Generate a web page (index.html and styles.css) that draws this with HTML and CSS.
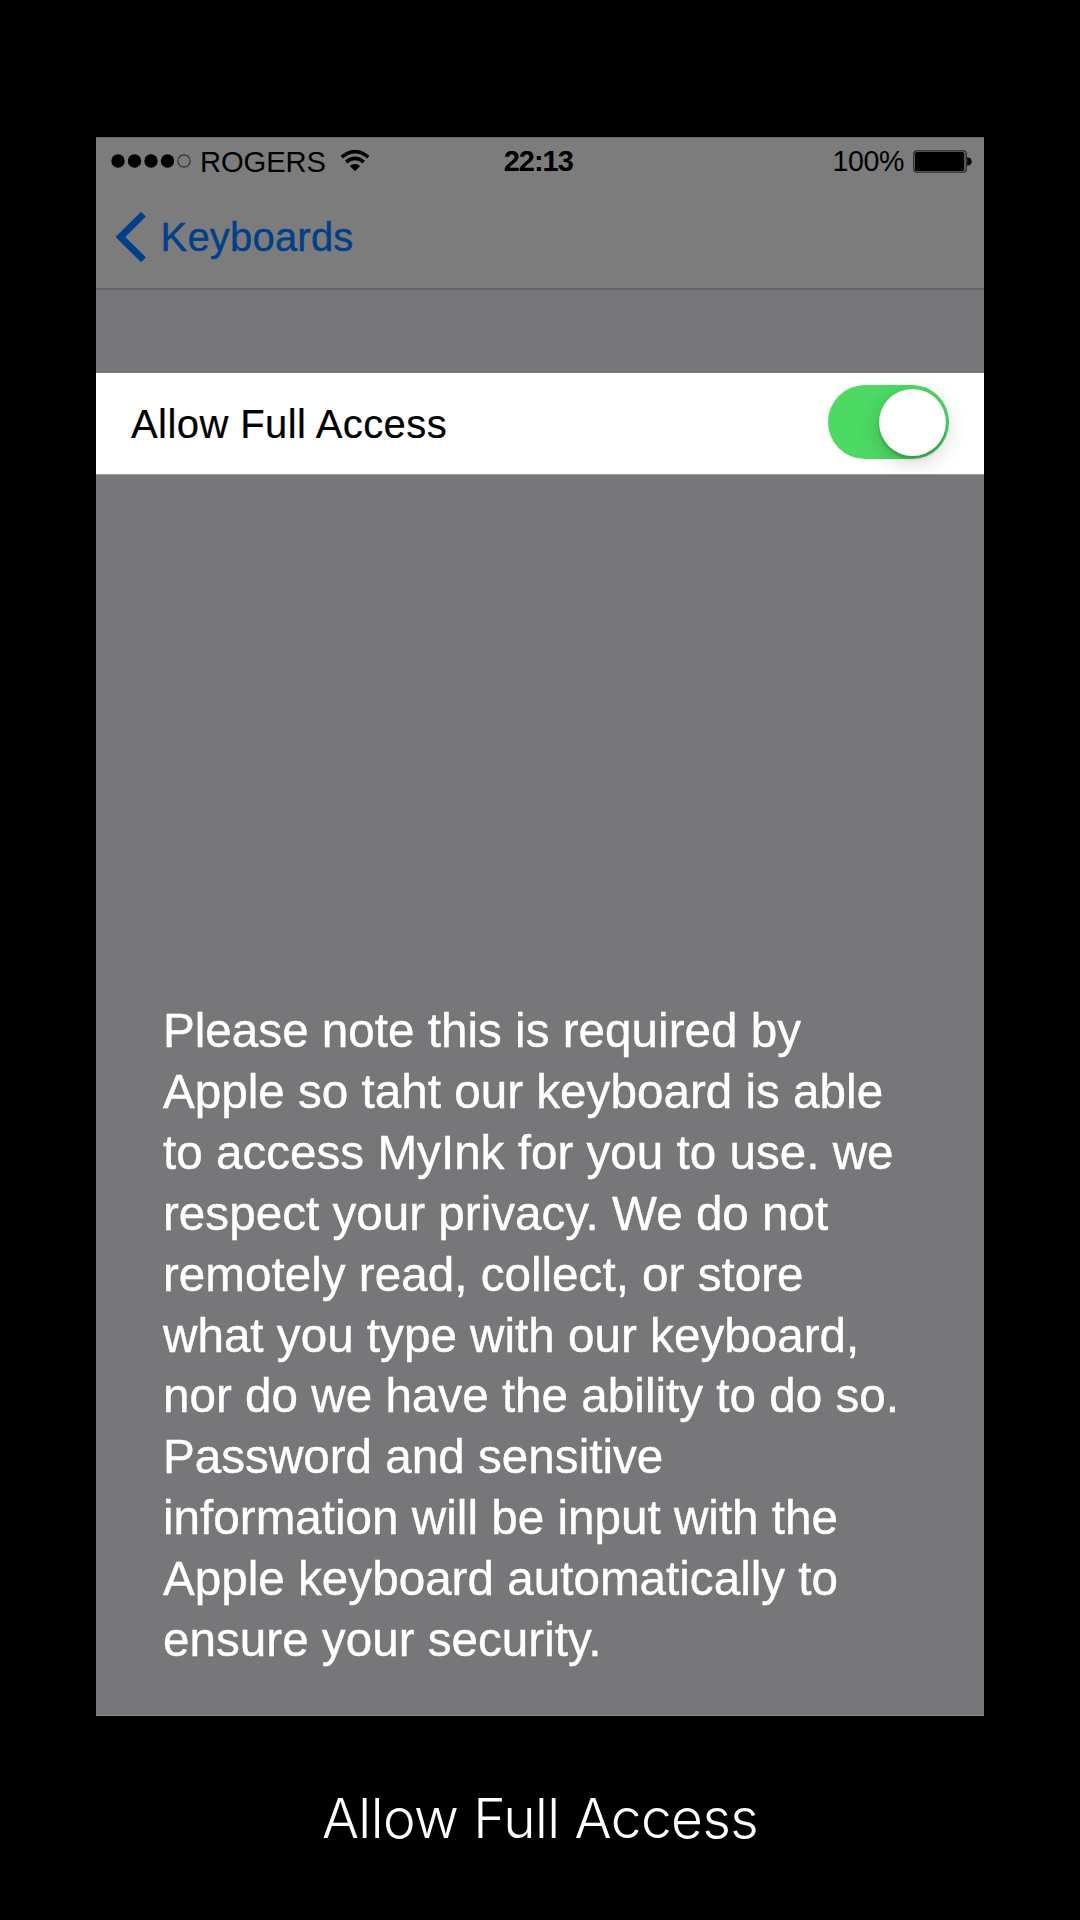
FILE: index.html
```html
<!DOCTYPE html>
<html lang="en">
<head>
<meta charset="utf-8">
<title>Allow Full Access</title>
<link rel="stylesheet" href="styles.css">
</head>
<body>
<main class="phone">
  <header class="header">
    <div class="status">
      <div class="status-left">
        <svg class="signal" width="82" height="16" viewBox="0 0 82 16">
          <circle cx="8" cy="8" r="6.7"/><circle cx="24.5" cy="8" r="6.7"/><circle cx="41" cy="8" r="6.7"/><circle cx="57.5" cy="8" r="6.7"/>
          <circle class="signal-empty" cx="74" cy="8" r="6.1"/>
        </svg>
        <span class="carrier">ROGERS</span>
        <svg class="wifi" width="30" height="22" viewBox="0 0 30 22">
          <path class="wave" d="M1.7 7.2Q15-4 28.3 7.2M6.2 12.1Q15 4.8 23.8 12.1"/>
          <path d="M9.8 16Q15 11.8 20.2 16L15 21.2Z"/>
        </svg>
      </div>
      <span class="clock">22:13</span>
      <div class="status-right">
        <span class="percent">100%</span>
        <svg class="battery" width="59" height="23" viewBox="0 0 59 23">
          <rect class="shell" x=".8" y=".8" width="52.4" height="21.4" rx="3.2"/>
          <rect x="2" y="2" width="49.3" height="19" rx="1.8"/>
          <path d="M54.2 7.2Q58.6 7.8 58.6 11.5T54.2 15.8Z"/>
        </svg>
      </div>
    </div>
    <nav class="nav">
      <svg class="chevron" width="30" height="50" viewBox="0 0 30 50"><path d="M27.5 2.2 4.4 25l23.1 22.8"/></svg>
      <span class="back">Keyboards</span>
    </nav>
  </header>
  <section class="row">
    <span class="row-label">Allow Full Access</span>
    <span class="switch"><span class="knob"></span></span>
  </section>
  <p class="note">Please note this is required by<br>Apple so taht our keyboard is able<br>to access MyInk for you to use. we<br>respect your privacy. We do not<br>remotely read, collect, or store<br>what you type with our keyboard,<br>nor do we have the ability to do so.<br>Password and sensitive<br>information will be input with the<br>Apple keyboard automatically to<br>ensure your security.</p>
</main>
<h1 class="caption">Allow Full Access</h1>
</body>
</html>
```
FILE: styles.css
```css
* { box-sizing: border-box; }
body {
  margin: 0;
  padding-top: 137px;
  height: 1920px;
  background: #000;
  font-family: "Liberation Sans", Arial, sans-serif;
  overflow: hidden;
}
svg { display: block; flex: none; }
.phone {
  width: 888px;
  height: 1579px;
  margin: 0 auto;
  background: #777779;
  border-bottom: 1px solid #858585;
}
.header {
  height: 153px;
  background: #7c7c7c;
  border-top: 1px solid #696969;
  border-bottom: 2px solid #666668;
}
.status {
  display: grid;
  grid-template-columns: 1fr auto 1fr;
  height: 46px;
  align-items: center;
  padding: 0 12.5px 0 14px;
  font-size: 29px;
  line-height: 34px;
}
.status-left, .status-right { display: flex; align-items: center; }
.status-right { justify-content: flex-end; }
.carrier { margin: 1px 0 0 8px; font-size: 29.2px; letter-spacing: -0.1px; }
.wifi { margin: -1px 0 0 14.5px; }
.signal-empty { fill: none; stroke: #333; stroke-width: 1.2; }
.wave { fill: none; stroke: #000; stroke-width: 3.6; }
.clock { font-weight: bold; letter-spacing: -1px; margin: 0 5px 0 0; }
.percent { margin: 0 8.5px 0 0; font-size: 28.6px; letter-spacing: -0.4px; }
.shell { fill: none; stroke: #262626; stroke-width: 1.3; }
.nav {
  display: flex;
  align-items: center;
  height: 105px;
  padding-left: 20px;
  color: #004088;
}
.chevron { fill: none; stroke: #004088; stroke-width: 6.8; }
.back {
  margin: 2px 0 0 14.5px;
  font-size: 40px;
  letter-spacing: 0.2px;
  -webkit-text-stroke: 0.4px #004088;
}
.row {
  display: flex;
  justify-content: space-between;
  align-items: center;
  height: 102px;
  margin-top: 83px;
  padding: 0 35.5px 3px 35px;
  background: #fff;
  border-bottom: 1px solid #98989c;
  overflow: hidden;
}
.row-label {
  padding-top: 4px;
  font-size: 40px;
  letter-spacing: 0.42px;
  -webkit-text-stroke: 0.2px #000;
}
.switch {
  display: flex;
  justify-content: flex-end;
  width: 121px;
  height: 74px;
  padding: 3.5px 3px;
  border-radius: 37px;
  background: #4cd964;
}
.knob {
  width: 67px;
  height: 67px;
  border-radius: 50%;
  background: #fff;
  box-shadow: 0 3px 3px rgba(0, 0, 0, .2), 0 6px 22px rgba(0, 0, 0, .18);
}
.note {
  width: 800px;
  margin: 525px 0 0 67px;
  color: #fff;
  font-size: 48.8px;
  line-height: 60.9px;
  white-space: nowrap;
  transform: scaleX(.976);
  transform-origin: left top;
  -webkit-text-stroke: 0.4px #fff;
}
.caption {
  margin: 67px 0 0;
  color: #fff;
  font-family: Inter, sans-serif;
  font-size: 55px;
  font-weight: 300;
  line-height: 70px;
  letter-spacing: -0.55px;
  text-align: center;
}
```
